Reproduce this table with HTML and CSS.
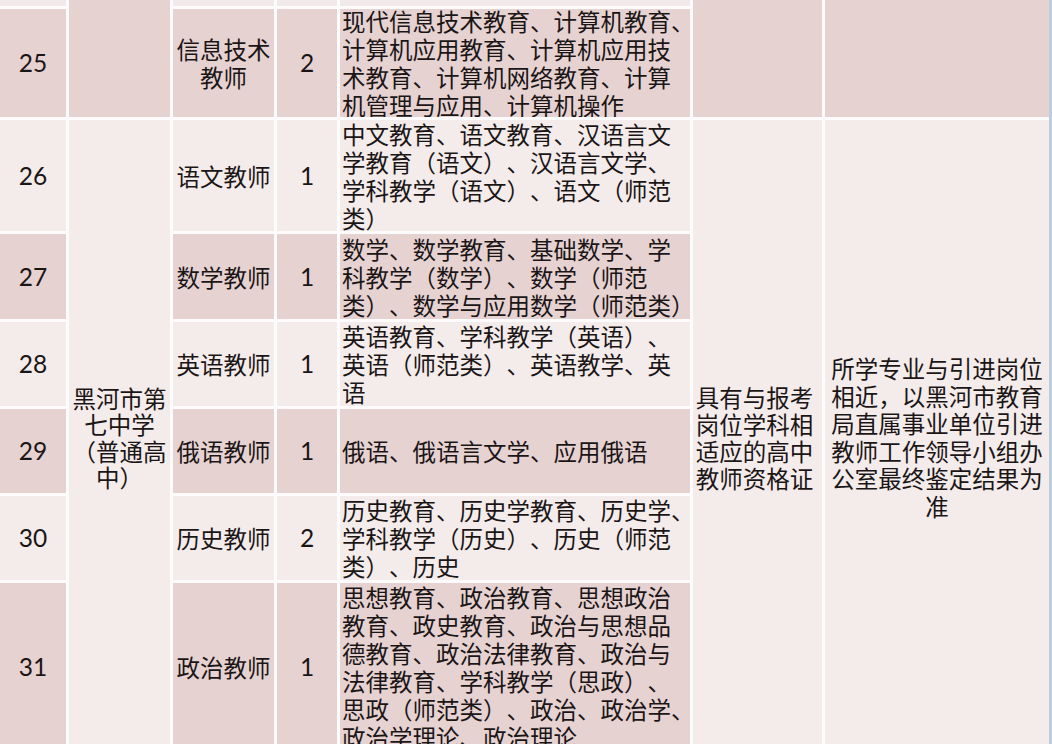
FILE: index.html
```html
<!DOCTYPE html>
<html lang="zh-CN">
<head>
<meta charset="utf-8">
<title>岗位表</title>
<link rel="stylesheet" href="styles.css">
</head>
<body>
<div class="sheet">
  <!-- strip of previous row -->
  <div class="c l top"></div>
  <div class="c d school-top"></div>
  <div class="c l top"></div>
  <div class="c l top"></div>
  <div class="c l top"></div>
  <div class="c d req-top"></div>
  <div class="c d note-top"></div>

  <!-- 25 -->
  <div class="c d num">25</div>
  <div class="c d job"><div>信息技术<br>教师</div></div>
  <div class="c d num">2</div>
  <div class="c d major"><div>现代信息技术教育、计算机教育、<br>计算机应用教育、计算机应用技<br>术教育、计算机网络教育、计算<br>机管理与应用、计算机操作</div></div>

  <!-- 26 -->
  <div class="c l num">26</div>
  <div class="c l school"><div>黑河市第<br>七中学<br><span class="p">（</span>普通高<br>中<span class="p">）</span></div></div>
  <div class="c l job">语文教师</div>
  <div class="c l num">1</div>
  <div class="c l major"><div>中文教育、语文教育、汉语言文<br>学教育<span class="p">（</span>语文<span class="p">）</span>、汉语言文学、<br>学科教学<span class="p">（</span>语文<span class="p">）</span>、语文<span class="p">（</span>师范<br>类<span class="p">）</span></div></div>
  <div class="c l req"><div>具有与报考<br>岗位学科相<br>适应的高中<br>教师资格证</div></div>
  <div class="c l note"><div>所学专业与引进岗位<br>相近<span class="p">，</span>以黑河市教育<br>局直属事业单位引进<br>教师工作领导小组办<br>公室最终鉴定结果为<br>准</div></div>

  <!-- 27 -->
  <div class="c d num">27</div>
  <div class="c d job">数学教师</div>
  <div class="c d num">1</div>
  <div class="c d major"><div>数学、数学教育、基础数学、学<br>科教学<span class="p">（</span>数学<span class="p">）</span>、数学<span class="p">（</span>师范<br>类<span class="p">）</span>、数学与应用数学<span class="p">（</span>师范类<span class="p">）</span></div></div>

  <!-- 28 -->
  <div class="c l num">28</div>
  <div class="c l job">英语教师</div>
  <div class="c l num">1</div>
  <div class="c l major"><div>英语教育、学科教学<span class="p">（</span>英语<span class="p">）</span>、<br>英语<span class="p">（</span>师范类<span class="p">）</span>、英语教学、英<br>语</div></div>

  <!-- 29 -->
  <div class="c d num">29</div>
  <div class="c d job">俄语教师</div>
  <div class="c d num">1</div>
  <div class="c d major"><div>俄语、俄语言文学、应用俄语</div></div>

  <!-- 30 -->
  <div class="c l num">30</div>
  <div class="c l job">历史教师</div>
  <div class="c l num">2</div>
  <div class="c l major"><div>历史教育、历史学教育、历史学、<br>学科教学<span class="p">（</span>历史<span class="p">）</span>、历史<span class="p">（</span>师范<br>类<span class="p">）</span>、历史</div></div>

  <!-- 31 -->
  <div class="c d num">31</div>
  <div class="c d job">政治教师</div>
  <div class="c d num">1</div>
  <div class="c d major"><div>思想教育、政治教育、思想政治<br>教育、政史教育、政治与思想品<br>德教育、政治法律教育、政治与<br>法律教育、学科教学<span class="p">（</span>思政<span class="p">）</span>、<br>思政<span class="p">（</span>师范类<span class="p">）</span>、政治、政治学、<br>政治学理论、政治理论</div></div>
</div>
</body>
</html>
```

FILE: styles.css
```css
html, body {
  margin: 0;
  padding: 0;
  background: #ffffff;
}

body {
  width: 1052px;
  height: 744px;
  overflow: hidden;
}

.sheet {
  width: 1049px;
  height: 744px;
  overflow: hidden;
  border-right: 3px solid #bccddd;
  display: grid;
  grid-template-columns: 66px 101px 101px 60px 350px 129px 224px;
  grid-template-rows: 6px 108px 111px 85px 84px 84px 84px 168px;
  gap: 3px;
  background: #fdfbfb;
  font-family: "Noto Sans CJK SC", "Noto Sans", sans-serif;
  font-size: 23.5px;
  line-height: 28px;
  color: #1b1616;
  text-spacing-trim: space-all;
  font-kerning: none;
}

.c {
  display: flex;
  align-items: center;
  justify-content: center;
  text-align: center;
  overflow: hidden;
  white-space: nowrap;
  min-height: 0;
}

.p {
  font-family: "Noto Sans CJK TC", "Noto Sans CJK SC", sans-serif;
}

.d { background: #e7d2d2; }
.l { background: #f4ebeb; }
.top { background: #f2eaea; }

.school-top { grid-column: 2; grid-row: 1 / 3; }
.req-top { grid-column: 6; grid-row: 1 / 3; }
.note-top { grid-column: 7; grid-row: 1 / 3; }

.num {
  font-family: "Lato", "Noto Sans", sans-serif;
  font-size: 24.5px;
}

.school {
  grid-column: 2;
  grid-row: 3 / 9;
  line-height: 26.5px;
  padding-top: 4px;
}

.req {
  grid-column: 6;
  grid-row: 3 / 9;
  line-height: 27px;
  padding-top: 4px;
  padding-right: 6px;
}

.note {
  grid-column: 7;
  grid-row: 3 / 9;
  line-height: 27.5px;
  padding-top: 4px;
}

.major {
  justify-content: flex-start;
  text-align: left;
  padding-left: 2px;
}
```
